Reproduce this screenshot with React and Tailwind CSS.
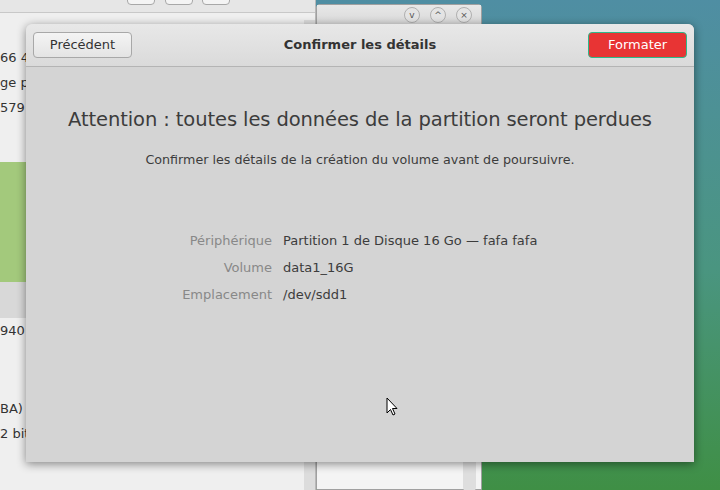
export default function App() {
  const f = { fontFamily: '"DejaVu Sans","Noto Sans",sans-serif' };
  return (
    <div className="relative w-[720px] h-[490px] overflow-hidden bg-[linear-gradient(180deg,#4f8ea3_0%,#4a9580_55%,#3f8f45_100%)]" style={f}>
      {/* back left window */}
      <div className="absolute left-0 top-0 w-[316px] h-[490px] bg-[#efefef] border-r border-[#b8b8b8] shadow-lg">
        <div className="h-[13px] bg-[#e6e6e6] border-b border-[#c8c8c8] relative">
          <div className="absolute left-[127px] top-[-4px] w-[28px] h-[9px] border border-[#a8a8a8] rounded bg-[#f4f4f4]" />
          <div className="absolute left-[165px] top-[-4px] w-[28px] h-[9px] border border-[#a8a8a8] rounded bg-[#f4f4f4]" />
          <div className="absolute left-[202px] top-[-4px] w-[28px] h-[9px] border border-[#a8a8a8] rounded bg-[#f4f4f4]" />
        </div>
        <div className="absolute right-0 top-[20px] w-[11px] h-[470px] bg-[#dcdcdc]" />
        <div className="absolute left-0 top-[45px] text-[13px] text-[#333] leading-[25px]">
          <div>66 48</div><div>ge p</div><div>579</div>
        </div>
        <div className="absolute left-0 top-[162px] w-[30px] h-[120px] bg-[#a3c97c]" />
        <div className="absolute left-0 top-[282px] w-[30px] h-[36px] bg-[#d8d8d8]" />
        <div className="absolute left-0 top-[321px] text-[13px] text-[#333]">940</div>
        <div className="absolute left-0 top-[396px] text-[13px] text-[#333] leading-[25px]">
          <div>BA) (</div><div>2 bit</div>
        </div>
      </div>
      {/* second window */}
      <div className="absolute left-[316px] top-[4px] w-[166px] h-[486px] bg-[#f4f4f4] border border-[#a0a0a0] rounded-t">
        <div className="h-[20px] bg-[linear-gradient(#e8e8e8,#d8d8d8)] flex justify-end items-center gap-[10px] pr-[9px]">
          {["v", "^", "×"].map((c, i) => (
            <div key={i} className="w-[16px] h-[16px] rounded-full border border-[#b0b0b0] bg-[#e4e4e4] flex items-center justify-center text-[9px] text-[#555] leading-none">{c}</div>
          ))}
        </div>
        <div className="absolute right-[5px] top-[452px] w-[13px] h-[34px] bg-[#dedede] rounded" />
      </div>
      {/* dialog */}
      <div className="absolute left-[26px] top-[24px] w-[668px] h-[438px] bg-[#d4d4d4] rounded-t-md shadow-[0_2px_10px_rgba(0,0,0,0.45)] flex flex-col">
        <div className="h-[43px] bg-[linear-gradient(#e8e8e8,#dadada)] border-b border-[#b4b4b4] rounded-t-md flex items-center justify-between px-[7px]">
          <div className="w-[99px] h-[26px] rounded border border-[#a8a8a8] bg-[linear-gradient(#f4f4f4,#e4e4e4)] flex items-center justify-center text-[13px] text-[#333]">Précédent</div>
          <div className="text-[13px] font-bold text-[#333]">Confirmer les détails</div>
          <div className="w-[99px] h-[26px] rounded-sm border border-[#2fb88a] bg-[#e83434] flex items-center justify-center text-[13px] text-white">Formater</div>
        </div>
        <div className="flex flex-col items-center text-[#3c3c3c]">
          <div className="mt-[40px] text-[19.5px] leading-[26px] tracking-[-0.1px]">Attention : toutes les données de la partition seront perdues</div>
          <div className="mt-[17px] text-[12.7px]">Confirmer les détails de la création du volume avant de poursuivre.</div>
        </div>
        <div className="mt-[58px] ml-[90px] grid grid-cols-[156px_auto] gap-x-[11px] text-[13px] leading-[27px] text-[#3c3c3c]">
          <div className="text-right text-[#888]">Périphérique</div><div>Partition 1 de Disque 16 Go — fafa fafa</div>
          <div className="text-right text-[#888]">Volume</div><div>data1_16G</div>
          <div className="text-right text-[#888]">Emplacement</div><div>/dev/sdd1</div>
        </div>
      </div>
      {/* cursor */}
      <svg className="absolute left-[386px] top-[397px]" width="14" height="20" viewBox="0 0 14 20">
        <path d="M1 1 L1 16 L4.5 12.5 L7 18 L9 17 L6.5 11.5 L11 11.5 Z" fill="white" stroke="black" strokeWidth="1" />
      </svg>
    </div>
  );
}
